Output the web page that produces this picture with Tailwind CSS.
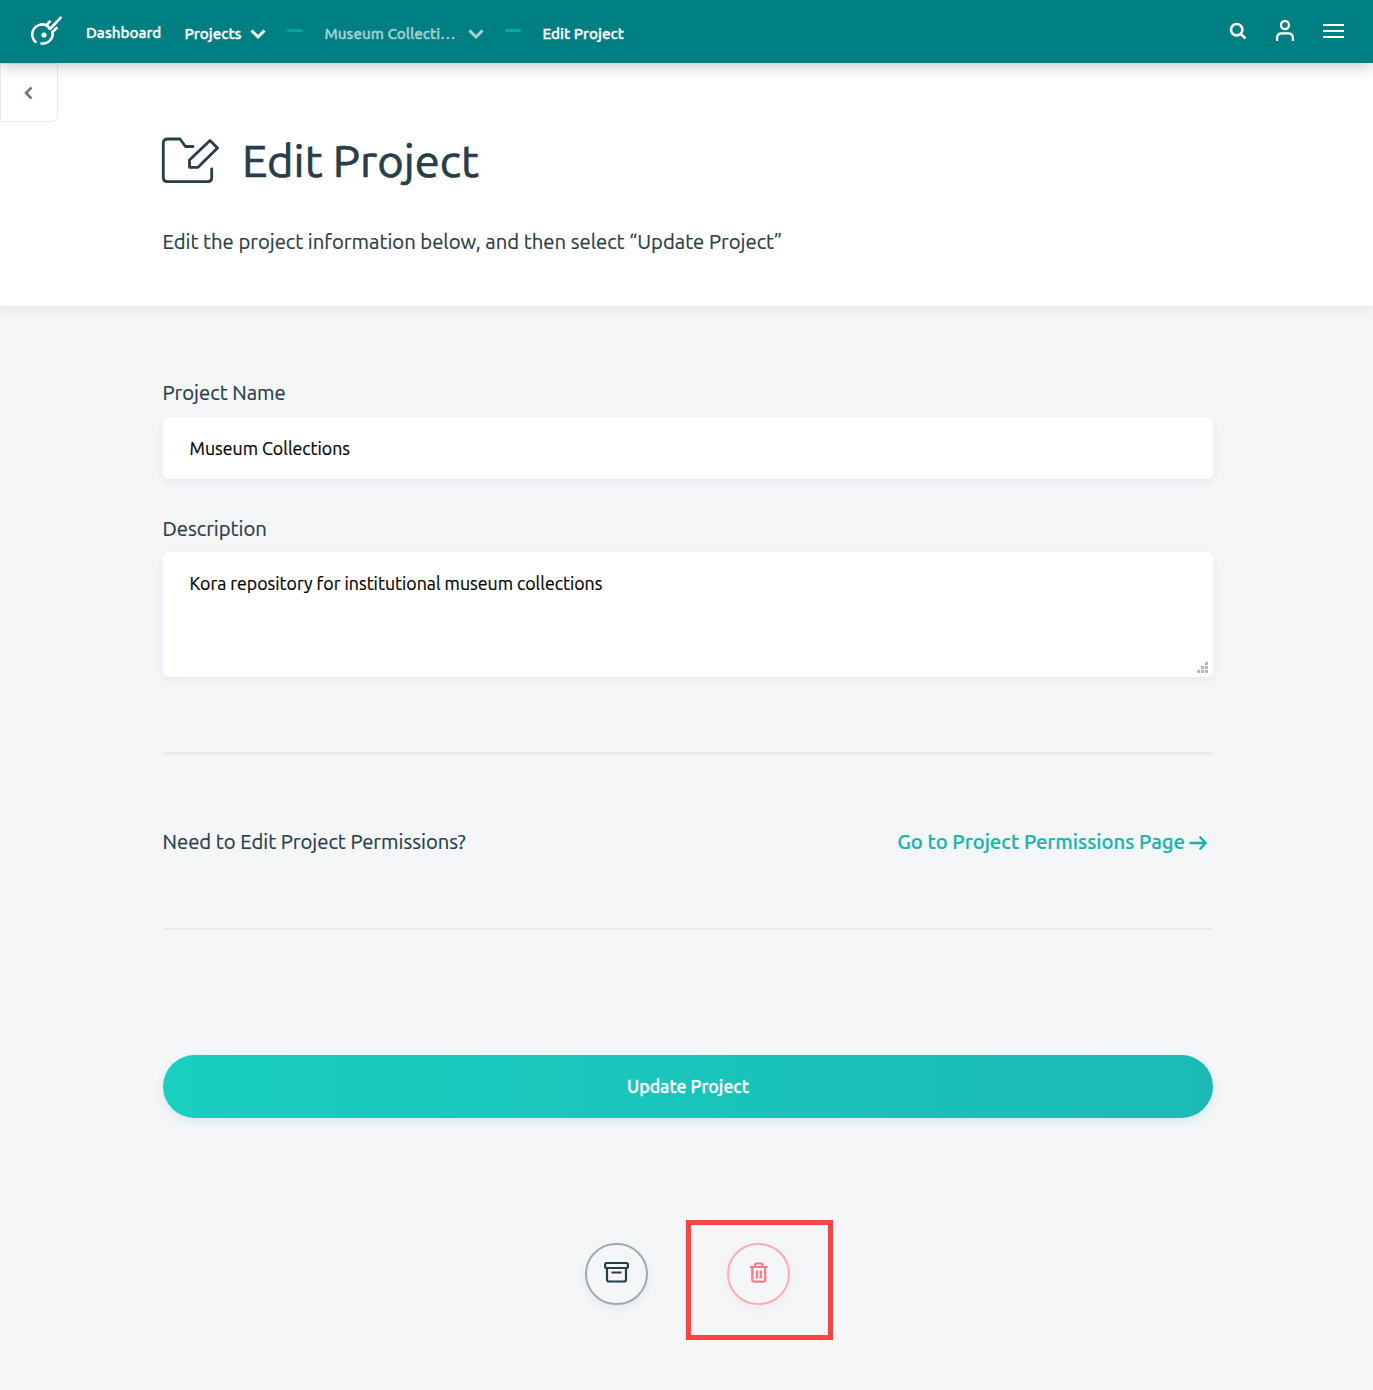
<!DOCTYPE html>
<html lang="en">
<head>
<meta charset="utf-8">
<title>Edit Project</title>
<script src="https://cdn.jsdelivr.net/npm/@tailwindcss/browser@4"></script>
</head>
<body class="min-h-[1390px] bg-[#f4f6f8] font-['Ubuntu','Noto_Sans',sans-serif] text-[#273d47] [-webkit-text-stroke:0.2px]">
<header class="relative z-10 flex h-[63px] items-center justify-between bg-[#007f83] pr-[29px] pl-[30px] text-[15.190px] font-medium text-white shadow-[0_3px_14px_rgba(40,50,70,0.28)] [-webkit-text-stroke:0.35px]">
  <nav class="flex items-center pt-1 leading-5">
    <svg class="mb-1.5 h-8 w-8" viewBox="0 0 32 32" fill="none" stroke="#fff" stroke-width="2.600"><path d="M6.300 27.700A10.200 10.200 0 0 1 16.500 10.200L20.500 5.700M10.500 28.200A9.700 9.700 0 0 0 22.500 17L27.500 12.300M19.500 14.500 31.500 2M15.500 10.300q2.500.2 4.500 4"/><circle cx="14" cy="20" r="2.600" fill="#fff" stroke="none"/></svg>
    <span class="mb-0.5 ml-6 w-[98.500px]">Dashboard</span>
    <span class="w-[65px]">Projects</span>
    <svg class="h-4 w-4" viewBox="0 0 16 16" fill="none" stroke="#fff" stroke-width="3"><path d="m1.500 4.500 6.500 6.500 6.500-6.500"/></svg>
    <span class="mb-[7px] ml-[21px] h-[3px] w-4 rounded-sm bg-[#00a5a0]"></span>
    <span class="ml-[22px] w-[143px] text-[#a6d2d3]">Museum Collecti…</span>
    <svg class="h-4 w-4" viewBox="0 0 16 16" fill="none" stroke="#a6d2d3" stroke-width="3"><path d="m1.500 4.500 6.500 6.500 6.500-6.500"/></svg>
    <span class="mb-[7px] ml-[21px] h-[3px] w-4 rounded-sm bg-[#00ada5]"></span>
    <span class="ml-[22px]">Edit Project</span>
  </nav>
  <div class="flex items-center">
    <svg class="mb-0.5 h-[18px] w-[18px]" viewBox="0 0 18 18" fill="none" stroke="#fff" stroke-width="2.600"><circle cx="7.700" cy="7.700" r="5.700"/><path d="m11.800 11.800 4.700 4.700"/></svg>
    <svg class="mb-1 ml-7 h-[22px] w-[20px]" viewBox="0 0 20 22" fill="none" stroke="#fff" stroke-width="2.300"><circle cx="10" cy="6" r="4"/><path d="M2.100 22v-3q0-4.700 4.700-4.700h6.400q4.700 0 4.700 4.700v3"/></svg>
    <svg class="mb-0.5 ml-7 h-4 w-[21px]" viewBox="0 0 21 16" stroke="#fff" stroke-width="2"><path d="M0 2h21M0 8h21M0 14h21"/></svg>
  </div>
</header>
<section class="relative h-[243px] bg-white px-[162.500px] pt-[66px] shadow-[0_2px_12px_rgba(40,50,60,0.1)]">
  <button class="absolute top-0 left-0 flex h-[59px] w-[58px] items-center justify-center rounded-br-md border border-[#e7eaec]" aria-label="Back">
    <svg class="h-4 w-3" viewBox="0 0 12 16" fill="none" stroke="#687c87" stroke-width="2.600"><path d="m8.500 2.500-5.500 5.500 5.500 5.500"/></svg>
  </button>
  <div class="flex h-16 items-center">
    <svg class="mb-0.5 -ml-[1.500px] h-[48px] w-[58px]" viewBox="0 0 58 48" fill="none" stroke="#273d47" stroke-width="2.800" stroke-linejoin="round" stroke-linecap="round"><path d="M32 10.500H24.500L19 3H6.500Q2.300 3 2.300 7.200V41.500Q2.300 45.700 6.500 45.700H46.500Q50.700 45.700 50.700 41.500V33M28.500 31.300V24L49 4.500 56.500 12 37 31.300Z"/></svg>
    <h1 class="ml-[23px] text-[45.400px] leading-[64px] [-webkit-text-stroke:0.7px]">Edit Project</h1>
  </div>
  <p class="mt-[34px] text-[20.250px] leading-[30px]">Edit the project information below, and then select “Update Project”</p>
</section>
<main class="ml-[163px] flex w-[1050px] flex-col">
  <label class="mt-[72px] -ml-[0.500px] text-[20.250px] leading-[30px]">Project Name</label>
  <div class="mt-[9px] flex h-[62px] items-center rounded-md bg-white px-[26.500px] text-[17.740px] text-black shadow-[0_3px_10px_rgba(40,50,60,0.06)]">Museum Collections</div>
  <label class="mt-[35px] -ml-[0.500px] text-[20.250px] leading-[30px]">Description</label>
  <div class="relative mt-[8px] h-[125px] rounded-md bg-white px-[26.500px] pt-[18px] text-[17.740px] leading-[26px] text-black shadow-[0_3px_10px_rgba(40,50,60,0.06)]">Kora repository for institutional museum collections
    <svg class="absolute right-[5px] bottom-1 h-[11px] w-[11px]" viewBox="0 0 11 11" fill="#b8b8b8"><path d="M8 0h3v3H8zM4 4h3v3H4zM8 4h3v3H8zM0 8h3v3H0zM4 8h3v3H4zM8 8h3v3H8z"/></svg>
  </div>
  <div class="mt-[75px] flex h-[178px] items-center justify-between border-t-3 border-b-2 border-[#e8eaec] pt-px text-[20.250px]">
    <span class="-ml-[0.500px]">Need to Edit Project Permissions?</span>
    <a class="flex items-center pr-[6px] font-medium text-[#13b5ae]">Go to Project Permissions Page
      <svg class="mt-0.5 ml-1 h-4 w-[18px]" viewBox="0 0 18 16" fill="none" stroke="#13b5ae" stroke-width="2.600" stroke-linejoin="round" stroke-linecap="round"><path d="M1.500 8h15M11.500 2.500 16.500 8 11.500 13.500"/></svg>
    </a>
  </div>
  <button class="mt-[125px] h-[63px] rounded-full bg-linear-to-r from-[#19cfbf] to-[#1bbab6] text-[17.720px] font-medium text-white shadow-[0_4px_10px_rgba(20,150,140,0.12)] [-webkit-text-stroke:0.35px]">Update Project</button>
  <div class="mt-[102px] ml-[422px] flex items-start">
    <button class="mt-[23px] flex h-[62px] w-[63px] items-center justify-center rounded-full border-2 border-[#a0a9ae] shadow-[0_4px_10px_rgba(40,50,60,0.06)]" aria-label="Archive">
      <svg class="mb-1 h-[22px] w-[25px]" viewBox="0 0 25 22" fill="none" stroke="#273d47" stroke-width="2.200" stroke-linejoin="round"><rect x="1.100" y="2" width="22.800" height="5" rx="1.500"/><path d="M3 7v11.500q0 2 2 2h15q2 0 2-2V7M7.500 11.500h10"/></svg>
    </button>
    <div class="ml-[38px] flex h-[120px] w-[147px] items-center justify-center border-5 border-[#ff4343] pb-[13px]">
      <button class="mr-[2px] flex h-[62px] w-[63px] items-center justify-center rounded-full border-2 border-[#ffabb5] shadow-[0_4px_10px_rgba(255,100,120,0.08)]" aria-label="Delete">
        <svg class="mb-[3px] h-[21px] w-[18px]" viewBox="0 0 18 21" fill="none" stroke="#ff7889" stroke-width="2.200"><path d="M0 5h17.500M5 5V3q0-1.500 1.700-1.500h4.100Q12.500 1.500 12.500 3v2M2.300 5v13q0 1.700 1.700 1.700h9.500q1.700 0 1.700-1.700V5M7 8.500v8M10.700 8.500v8"/></svg>
      </button>
    </div>
  </div>
</main>
</body>
</html>
